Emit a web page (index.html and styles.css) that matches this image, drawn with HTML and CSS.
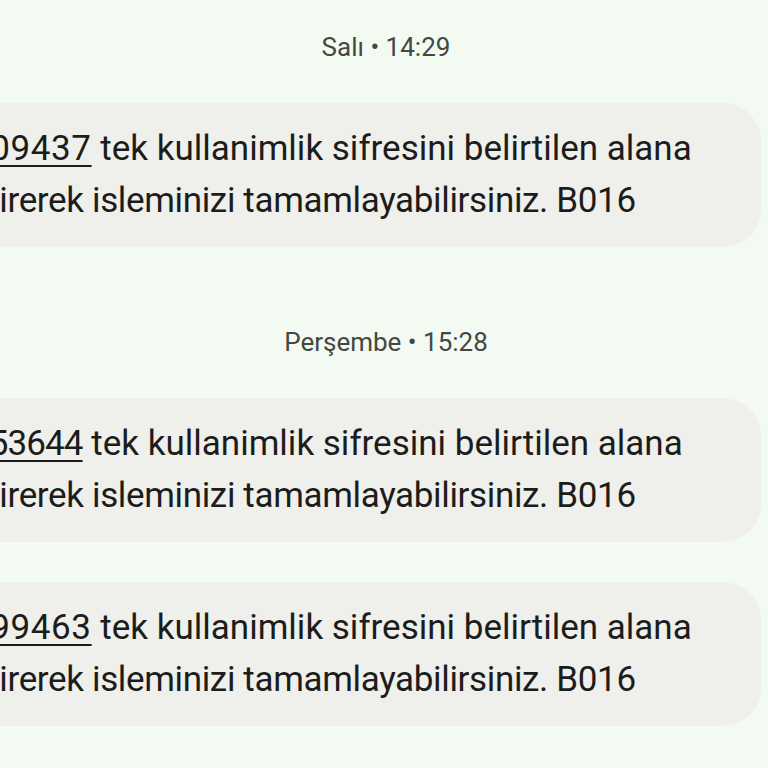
FILE: index.html
```html
<!DOCTYPE html>
<html lang="tr">
<head>
<meta charset="utf-8">
<title>Mesajlar</title>
<link rel="stylesheet" href="styles.css">
</head>
<body>
<main class="thread">
  <section class="group">
    <div class="stamp">Salı • 14:29</div>
    <div class="bubble">
      <p class="msg"><span class="code">709437</span> tek kullanimlik sifresini belirtilen alana<br><span class="tail">girerek isleminizi tamamlayabilirsiniz. B016</span></p>
    </div>
  </section>
  <section class="group">
    <div class="stamp">Perşembe • 15:28</div>
    <div class="bubble">
      <p class="msg"><span class="code code-narrow">753644</span> tek kullanimlik sifresini belirtilen alana<br><span class="tail">girerek isleminizi tamamlayabilirsiniz. B016</span></p>
    </div>
    <div class="bubble">
      <p class="msg"><span class="code">799463</span> tek kullanimlik sifresini belirtilen alana<br><span class="tail">girerek isleminizi tamamlayabilirsiniz. B016</span></p>
    </div>
  </section>
</main>
</body>
</html>
```
FILE: styles.css
```css
html, body {
  margin: 0;
  padding: 0;
  background: #f3faf2;
  overflow: hidden;
}
body {
  width: 768px;
  height: 768px;
  font-family: Roboto, "Noto Sans", sans-serif;
}
.thread {
  display: flex;
  flex-direction: column;
  padding-top: 31px;
  gap: 79px;
}
.group {
  display: flex;
  flex-direction: column;
  gap: 40px;
}
.stamp {
  text-align: center;
  font-size: 26px;
  line-height: 32px;
  color: #434843;
  padding-left: 4px;
}
.bubble {
  margin-left: -40px;
  margin-right: 7px;
  background: #efefeb;
  border-radius: 38px;
  padding: 20px 20px;
}
.msg {
  margin: 0;
  font-size: 35px;
  line-height: 52px;
  color: #1c1d1b;
  white-space: nowrap;
  text-indent: -10px;
}
.tail {
  letter-spacing: -0.35px;
}
.code {
  letter-spacing: 0.6px;
  text-decoration: underline;
  text-decoration-thickness: 2px;
  text-underline-offset: 5px;
}
.code-narrow {
  letter-spacing: -0.9px;
}
```
